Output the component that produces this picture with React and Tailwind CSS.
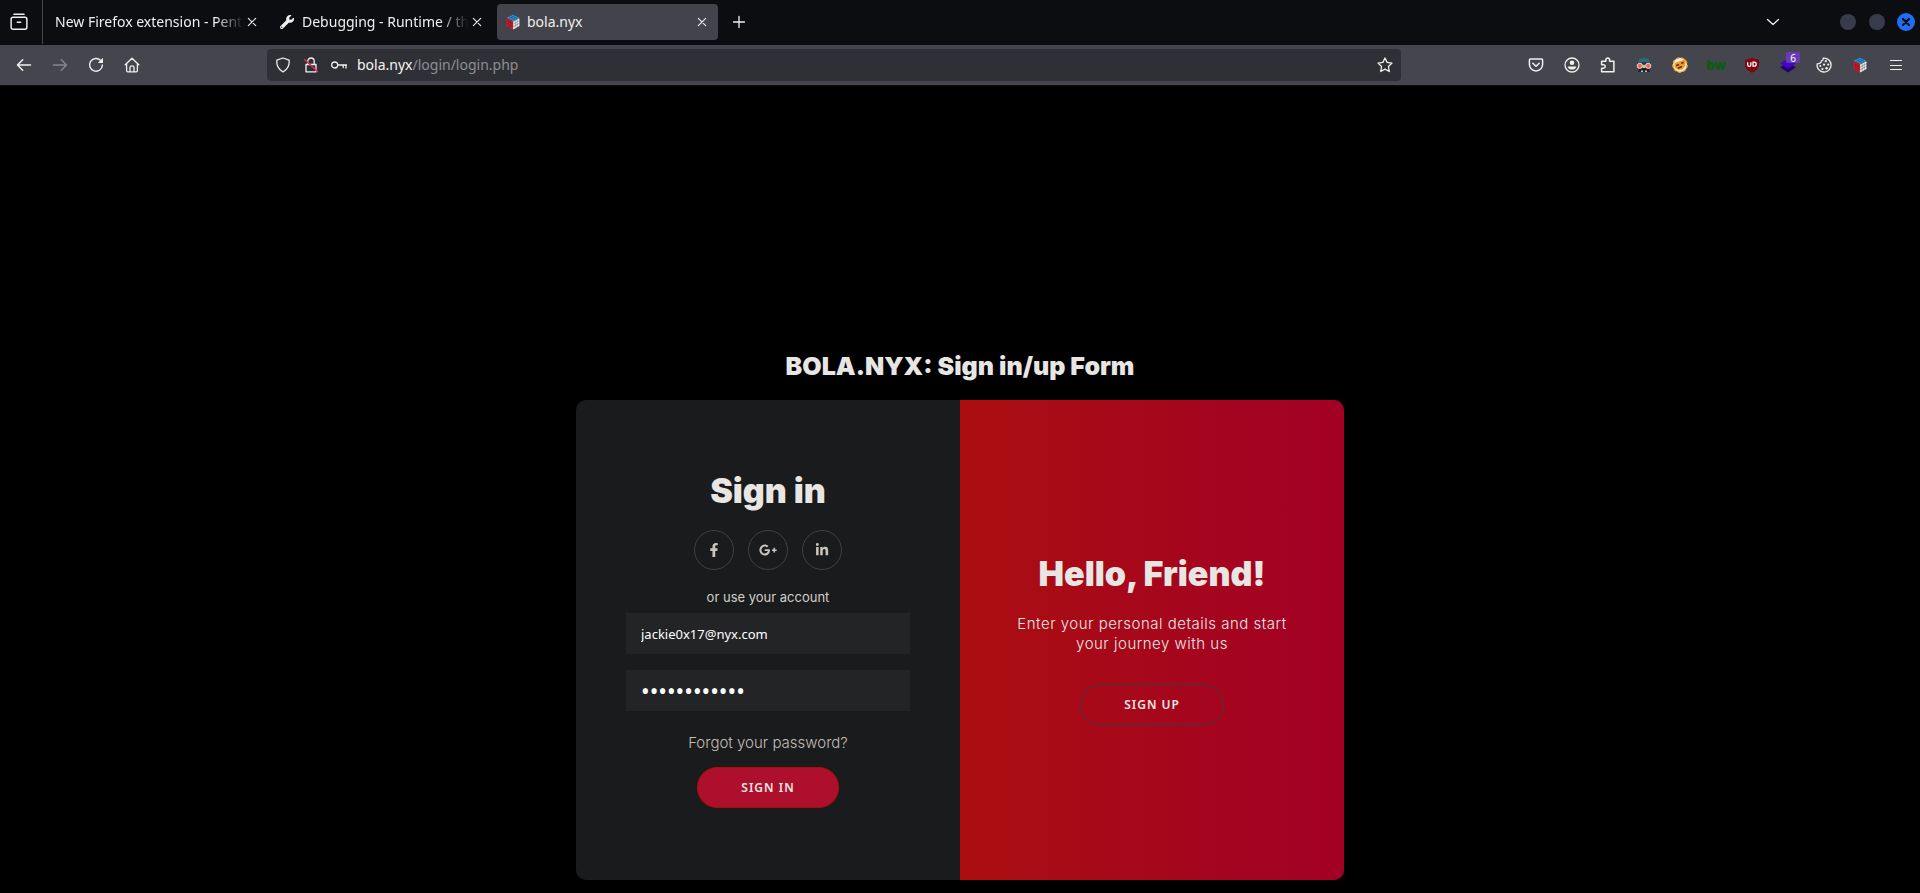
import React from "react";
import { FaFacebookF, FaGooglePlusG, FaLinkedinIn, FaWrench } from "react-icons/fa";

const Icon = ({ children, className = "size-4" }) => (
  <svg viewBox="0 0 16 16" className={className} fill="none" stroke="currentColor" strokeWidth="1.3" strokeLinecap="round" strokeLinejoin="round" aria-hidden="true">
    {children}
  </svg>
);

const Cube = ({ className = "size-4" }) => (
  <svg viewBox="0 0 16 16" className={className} aria-hidden="true">
    <path d="M8 .8 14.2 3.8 8 7 1.8 3.8Z" fill="#2f9be8" />
    <path d="M1.6 4.2 7.8 7.4V15.4L1.6 12Z" fill="#e8101c" />
    <path d="M8.2 7.4 14.4 4.2V12L8.2 15.4Z" fill="#fafafa" />
    <g stroke="#26303c" strokeWidth=".4" fill="none">
      <path d="M4 2.7 10 5.8M6 1.7 12 4.8M4 4.8 10 1.7M6 5.8 12 2.7" />
      <path d="M3.7 5.2V13M5.7 6.2V14.1M1.6 6.7 7.7 9.9M1.6 9.3 7.7 12.6" />
      <path d="M10.2 6.2V14.1M12.2 5.2V13M8.3 9.9 14.4 6.7M8.3 12.6 14.4 9.3" />
    </g>
  </svg>
);

const CloseIcon = () => (
  <Icon className="size-4"><path d="M4.3 4.3 11.7 11.7M11.7 4.3 4.3 11.7" strokeWidth="1.1" /></Icon>
);

const ToolButton = ({ label, children, className = "" }) => (
  <button type="button" aria-label={label} className={`relative flex h-8 w-9 shrink-0 items-center justify-center ${className}`}>
    {children}
  </button>
);

function TabStrip() {
  return (
    <div className="flex h-[45px] items-center bg-[#0c0d11] pb-px">
      <div className="flex h-full w-[43px] shrink-0 items-center justify-center border-r border-[#45464d] pr-1">
        <button type="button" aria-label="View recent browsing">
          <Icon className="size-[18px]">
            <path d="M3.5 1.2H12.5M2.8 3.8H13.2Q15 3.8 15 5.6V12.6Q15 14.4 13.2 14.4H2.8Q1 14.4 1 12.6V5.6Q1 3.8 2.8 3.8ZM6.5 8.3H9.5" />
          </Icon>
        </button>
      </div>
      <div className="flex h-9 w-[222px] shrink-0 items-center pl-3 pr-[5px]">
        <span className="min-w-0 flex-1 whitespace-nowrap [mask-image:linear-gradient(to_right,black_85%,transparent)]">New Firefox extension - Pent</span>
        <button type="button" aria-label="Close tab"><CloseIcon /></button>
      </div>
      <div className="flex h-9 w-[225px] shrink-0 items-center pl-[15px] pr-[5px]">
        <FaWrench className="mr-2 size-[14px]" />
        <span className="min-w-0 flex-1 whitespace-nowrap [mask-image:linear-gradient(to_right,black_82%,transparent)]">Debugging - Runtime / thi</span>
        <button type="button" aria-label="Close tab"><CloseIcon /></button>
      </div>
      <div className="ml-[7px] flex h-9 w-[221px] shrink-0 items-center rounded bg-[#43444b] px-2">
        <Cube className="mr-[6px] size-4" />
        <span className="flex-1">bola.nyx</span>
        <button type="button" aria-label="Close tab"><CloseIcon /></button>
      </div>
      <button type="button" aria-label="New tab" className="ml-[13px]">
        <Icon><path d="M8 2.5V13.5M2.5 8H13.5" /></Icon>
      </button>
      <div className="ml-auto flex items-center pr-[5px]">
        <button type="button" aria-label="List all tabs" className="mr-[59px]">
          <Icon><path d="M2.5 5.5 8 10.5 13.5 5.5" /></Icon>
        </button>
        <button type="button" aria-label="Minimize" className="mr-[13px] size-4 rounded-full bg-[#383c4a]" />
        <button type="button" aria-label="Maximize" className="mr-3 size-4 rounded-full bg-[#383c4a]" />
        <button type="button" aria-label="Close window" className="flex size-[18px] items-center justify-center rounded-full bg-[#1f6ff5] text-[#0c0d11]">
          <Icon className="size-4"><path d="M5 5 11 11M11 5 5 11" strokeWidth="2.2" /></Icon>
        </button>
      </div>
    </div>
  );
}

function Toolbar() {
  return (
    <div className="flex h-10 items-center bg-[#45464d] px-[6px]">
      <ToolButton label="Back"><Icon><path d="M1.5 8H14.5M6.7 2.8 1.5 8 6.7 13.2" strokeWidth="1.5" /></Icon></ToolButton>
      <ToolButton label="Forward" className="text-[#85868b]"><Icon><path d="M1.5 8H14.5M9.3 2.8 14.5 8 9.3 13.2" strokeWidth="1.5" /></Icon></ToolButton>
      <ToolButton label="Reload">
        <Icon><path d="M12.8 3.6A6.4 6.4 0 1 0 14.4 8" strokeWidth="1.4" /><path d="M15 .8V6H9.8Z" fill="currentColor" stroke="none" /></Icon>
      </ToolButton>
      <ToolButton label="Home">
        <Icon><path d="M1.2 7.8 8 1.2 14.8 7.8M2.6 6.8V13.6Q2.6 14.8 3.8 14.8H12.2Q13.4 14.8 13.4 13.6V6.8M6 14.6V10.2Q6 8.8 8 8.8Q10 8.8 10 10.2V14.6" /></Icon>
      </ToolButton>
      <div className="mx-[117px] flex h-8 min-w-0 flex-1 items-center rounded bg-[#2f3035] px-2">
        <button type="button" aria-label="Tracking protection" className="mr-3"><Icon><path d="M8 1 14.2 3.2Q14.8 11 8 15Q1.2 11 1.8 3.2Z" /></Icon></button>
        <button type="button" aria-label="Connection not secure" className="mr-3">
          <Icon><path d="M3 7.5H13V14.8H3ZM4.8 7.3V4.2A3.2 3.2 0 0 1 11.2 4.2V7.3" /><path d="M1.5 2.5 14.5 14.5" stroke="#e22850" strokeWidth="1.5" /></Icon>
        </button>
        <button type="button" aria-label="Saved login" className="mr-[10px]">
          <Icon><circle cx="3.7" cy="8" r="3" /><path d="M6.8 8H15.5M15 8V11M12.2 8V10.5" /></Icon>
        </button>
        <a href="#address" className="min-w-0 flex-1 truncate text-[#8d8d91]"><span className="text-[#f5f5f3]">bola.nyx</span>/login/login.php</a>
        <button type="button" aria-label="Bookmark this page"><Icon><path d="M8 1 10.1 5.4 15 6.1 11.4 9.5 12.3 14.5 8 12.1 3.7 14.5 4.6 9.5 1 6.1 5.9 5.4Z" /></Icon></button>
      </div>
      <ToolButton label="Pocket"><Icon><path d="M2.4 2H13.6Q14.6 2 14.6 3V7.5A6.6 6.4 0 0 1 1.4 7.5V3Q1.4 2 2.4 2ZM4.8 6.2 8 9.2 11.2 6.2" strokeWidth="1.5" /></Icon></ToolButton>
      <ToolButton label="Account">
        <Icon><circle cx="8" cy="8" r="7" /><circle cx="8" cy="5.8" r="2.3" fill="currentColor" stroke="none" /><path d="M3.7 9.5H12.3Q11.8 12.6 8 12.6Q4.2 12.6 3.7 9.5Z" fill="currentColor" stroke="none" /></Icon>
      </ToolButton>
      <ToolButton label="Extensions">
        <Icon><path d="M1.6 4.2H5.8V3A1.9 1.9 0 0 1 9.6 3V4.2H13.9V14.8H1.6V11.2H3.5A1.7 1.7 0 0 0 3.5 7.8H1.6Z" strokeWidth="1.5" /></Icon>
      </ToolButton>
      <ToolButton label="Disguise">
        <svg viewBox="0 0 16 16" className="size-4" aria-hidden="true">
          <path d="M2 7Q2 1 8 1Q14 1 14 7Z" fill="#2c6b7e" />
          <path d="M1 5.2H15V7H1Z" fill="#173e4c" />
          <path d="M3 11H13L13.6 15H2.4Z" fill="#1b2129" />
          <path d="M6.5 8H9.5V11H6.5Z" fill="#e7b994" />
          <circle cx="3.8" cy="8.8" r="2.6" fill="#e76c55" stroke="#f3d3c8" strokeWidth="1" />
          <circle cx="12.2" cy="8.8" r="2.6" fill="#e76c55" stroke="#f3d3c8" strokeWidth="1" />
          <path d="M5 13.6H7V15H5ZM9 13.6H11V15H9Z" fill="#b8bec2" />
        </svg>
      </ToolButton>
      <ToolButton label="Proxy">
        <svg viewBox="0 0 16 16" className="size-4" aria-hidden="true">
          <circle cx="8" cy="8" r="7.2" fill="#f2f0ec" stroke="#f39a1e" strokeWidth="1.4" strokeDasharray="3 2" />
          <path d="M2.5 6 7 4.4 13.8 2.2 13.4 6.5 13.2 9 10.5 12.4 6 13 2.6 10.5Z" fill="#f39a1e" />
          <path d="M4.2 8.8 7 7.6M9.2 6.3 11.5 5.4M6 11.2 10 9.6" stroke="#5a3208" strokeWidth="1.6" />
        </svg>
      </ToolButton>
      <ToolButton label="BuiltWith"><span className="font-[Inter,sans-serif] text-[13px] font-black leading-4 text-[#0d5a10]">bw</span></ToolButton>
      <ToolButton label="Content blocker">
        <svg viewBox="0 0 16 16" className="size-4" aria-hidden="true">
          <path d="M8 .5Q11 2.4 15 2.4V8Q14.5 13 8 15.7Q1.5 13 1 8V2.4Q5 2.4 8 .5Z" fill="#800610" />
          <path d="M3.7 5.2V7.8A1.6 1.6 0 0 0 6.9 7.8V5.2M9 5.2V9.2H10.2A2 2 0 0 0 10.2 5.2H8.4" fill="none" stroke="#fff" strokeWidth="1.3" />
        </svg>
      </ToolButton>
      <ToolButton label="Technology profiler">
        <svg viewBox="0 0 16 16" className="size-4" aria-hidden="true">
          <path d="M0 10.2 8 5.5 16 10.2 8 15.6Z" fill="#230072" />
          <path d="M0 6.3 8 1.5 16 6.3 8 11.8Z" fill="#4608ba" />
        </svg>
        <span className="absolute top-[3px] right-[6px] flex h-[11px] w-[14px] items-center justify-center rounded-[2px] bg-[#6b3ab8] text-[10px] leading-none text-white">6</span>
      </ToolButton>
      <ToolButton label="Cookie editor">
        <Icon>
          <path d="M1.2 6.8A7 7 0 1 0 7.2 1.1Q7.6 3.4 5.4 3.8Q5.4 6.8 1.2 6.8Z" />
          <g fill="currentColor" stroke="none"><circle cx="8" cy="7.6" r="1.1" /><circle cx="9.8" cy="4.2" r="1.1" /><circle cx="12.2" cy="7.6" r="1.1" /><circle cx="10.6" cy="11.2" r="1.2" /><circle cx="6.4" cy="12" r="1.1" /><circle cx="4.4" cy="9" r="1" /></g>
        </Icon>
      </ToolButton>
      <ToolButton label="Cube"><Cube /></ToolButton>
      <ToolButton label="Open application menu"><Icon><path d="M2.5 3.5H13.5M2.5 8.5H13.5M2.5 12.5H13.5" strokeWidth="1" /></Icon></ToolButton>
    </div>
  );
}

const networks = [
  { name: "Facebook", Glyph: FaFacebookF },
  { name: "Google Plus", Glyph: FaGooglePlusG },
  { name: "LinkedIn", Glyph: FaLinkedinIn },
];

const inputClass = "block h-[41px] w-full bg-[#232426] px-[15px] font-['Noto_Sans',sans-serif] text-white outline-none";
const buttonClass = "h-[41px] rounded-[20px] border px-[43px] font-['Noto_Sans',sans-serif] text-xs font-semibold uppercase tracking-[1px]";

export default function App() {
  return (
    <div className="flex min-h-screen flex-col bg-black">
      <header className="border-b border-[#0c0d11] font-['Noto_Sans',sans-serif] text-sm leading-5 text-[#f0f0ee]">
        <TabStrip />
        <Toolbar />
      </header>
      <main className="flex flex-1 flex-col items-center justify-end pb-[13px] font-[Inter,sans-serif] text-[#e8e6e3]">
        <h2 className="mb-5 text-[25px] font-black leading-7">BOLA.NYX: Sign in/up Form</h2>
        <div className="grid min-h-[480px] w-full max-w-3xl grid-cols-2 overflow-hidden rounded-[10px] bg-[#1a1b1d]">
          <form className="flex flex-col items-center justify-center px-[50px]" onSubmit={(e) => e.preventDefault()}>
            <h1 className="text-[34px] font-black leading-[38px]">Sign in</h1>
            <div className="my-5 flex gap-[14px]">
              {networks.map(({ name, Glyph }) => (
                <a key={name} href="#social" aria-label={name} className="flex size-10 items-center justify-center rounded-full border border-[#3e4042] text-[#c8c3bc]">
                  <Glyph className={name === "Google Plus" ? "size-[18px]" : "size-[14px]"} />
                </a>
              ))}
            </div>
            <span className="mb-2 text-[13px] leading-[15px] text-[#d2cfca]">or use your account</span>
            <input type="email" aria-label="Email" defaultValue="jackie0x17@nyx.com" className={`${inputClass} mb-4 text-[13px]`} />
            <input type="password" aria-label="Password" defaultValue="abcdefghijkl" className={`${inputClass} text-[23px]`} />
            <a href="#forgot" className="mt-[23px] mb-[15px] text-[15px] font-light leading-[18px] text-[#c3beb6]">Forgot your password?</a>
            <button type="submit" className={`${buttonClass} border-[#a01408] bg-[#ae0f2d]`}>Sign In</button>
          </form>
          <section className="flex flex-col items-center justify-center bg-linear-to-r from-[#ac0e10] via-[#a6071b] to-[#a30025] px-10 text-center">
            <h1 className="text-[34px] font-black leading-[38px]">Hello, Friend!</h1>
            <p className="mt-[21px] mb-[30px] text-[15px] font-light leading-5 tracking-[0.5px]">Enter your personal details and start your journey with us</p>
            <button type="button" className={`${buttonClass} border-[#3c3a3d]`}>Sign Up</button>
          </section>
        </div>
      </main>
    </div>
  );
}
